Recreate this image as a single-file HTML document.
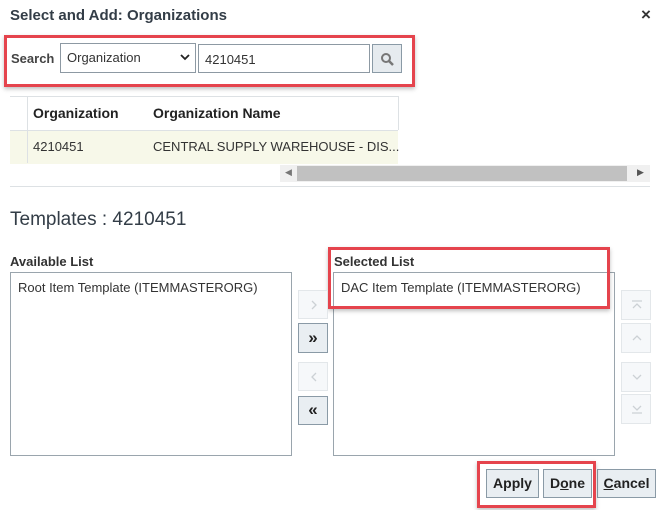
<!DOCTYPE html>
<html><head><style>
body{margin:0;width:670px;height:510px;background:#fff;font-family:"Liberation Sans",sans-serif;position:relative;overflow:hidden;color:#333}
.a{position:absolute}
.red{position:absolute;border:3px solid #e5444d;box-shadow:0 2px 4px rgba(0,0,0,.25)}
.btn{position:absolute;background:#e9eef2;border:1px solid #8a9aa6;box-sizing:border-box;text-align:center;font-size:13px;font-weight:bold;color:#222}
.dis{position:absolute;background:#f6f8fa;border:1px solid #e3e7ea;box-sizing:border-box}
.dis svg{position:absolute;left:9px;top:8px}
.box{position:absolute;border:1px solid #9aa5ad;box-sizing:border-box;background:#fff;font-size:13px;color:#333}
</style></head><body>
<div class="a" style="left:10px;top:7px;font-size:15px;font-weight:bold;color:#333d47">Select and Add: Organizations</div>
<div class="a" style="left:641px;top:5px;font-size:17px;font-weight:bold;color:#333">×</div>

<div class="a" style="left:11px;top:51px;font-size:13px;font-weight:bold;color:#444">Search</div>
<div class="box" style="left:60px;top:43px;width:136px;height:30px;border-color:#8d99a3"><span class="a" style="left:6px;top:6px;font-size:13px">Organization</span></div>
<svg class="a" style="left:180px;top:53px" width="10" height="8"><path d="M1 2 L5 6 L9 2" stroke="#222" stroke-width="1.8" fill="none"/></svg>
<div class="box" style="left:198px;top:44px;width:172px;height:29px;border-color:#8d99a3"><span class="a" style="left:6px;top:7px">4210451</span></div>
<div class="btn" style="left:372px;top:44px;width:30px;height:29px;background:#e6ebef"><svg class="a" style="left:7px;top:7px" width="15" height="15"><circle cx="6" cy="6" r="4" stroke="#777" stroke-width="2" fill="none"/><path d="M9 9 L13 13" stroke="#777" stroke-width="2.5"/></svg></div>
<div class="red" style="left:4px;top:35px;width:405px;height:46px"></div>

<div class="a" style="left:10px;top:96px;width:388px;height:1px;background:#dde1e4"></div>
<div class="a" style="left:27px;top:96px;width:1px;height:67px;background:#dde1e4"></div>
<div class="a" style="left:398px;top:96px;width:1px;height:34px;background:#dde1e4"></div>
<div class="a" style="left:33px;top:105px;font-size:14px;font-weight:bold;color:#222">Organization</div>
<div class="a" style="left:153px;top:105px;font-size:14px;font-weight:bold;color:#222">Organization Name</div>
<div class="a" style="left:10px;top:130px;width:388px;height:33px;background:#f7f8e9;border-top:1px solid #dde1e4"></div>
<div class="a" style="left:27px;top:130px;width:1px;height:33px;background:#dde1e4"></div>
<div class="a" style="left:33px;top:139px;font-size:13px">4210451</div>
<div class="a" style="left:153px;top:139px;font-size:13px">CENTRAL SUPPLY WAREHOUSE - DIS...</div>
<div class="a" style="left:280px;top:165px;width:370px;height:17px;background:#f0f0f0"></div>
<div class="a" style="left:297px;top:166px;width:330px;height:15px;background:#c1c1c1"></div>
<div class="a" style="left:285px;top:167px;font-size:9px;color:#777">◀</div>
<div class="a" style="left:637px;top:167px;font-size:9px;color:#555">▶</div>
<div class="a" style="left:10px;top:186px;width:640px;height:1px;background:#dde1e4"></div>

<div class="a" style="left:10px;top:209px;font-size:19px;color:#333d47">Templates : 4210451</div>
<div class="a" style="left:10px;top:254px;font-size:13px;font-weight:bold;color:#333">Available List</div>
<div class="box" style="left:10px;top:272px;width:282px;height:184px"><span class="a" style="left:7px;top:7px">Root Item Template (ITEMMASTERORG)</span></div>
<div class="a" style="left:334px;top:254px;font-size:13px;font-weight:bold;color:#333">Selected List</div>
<div class="box" style="left:333px;top:272px;width:282px;height:184px"><span class="a" style="left:7px;top:7px">DAC Item Template (ITEMMASTERORG)</span></div>
<div class="red" style="left:328px;top:247px;width:276px;height:56px"></div>

<div class="dis" style="left:298px;top:290px;width:30px;height:29px"><svg width="12" height="12"><path d="M4 2 L8 6 L4 10" stroke="#ccd1d5" stroke-width="1.3" fill="none"/></svg></div>
<div class="btn" style="left:298px;top:323px;width:30px;height:30px;line-height:27px;font-size:17px">»</div>
<div class="dis" style="left:298px;top:362px;width:30px;height:29px"><svg width="12" height="12"><path d="M8 2 L4 6 L8 10" stroke="#ccd1d5" stroke-width="1.3" fill="none"/></svg></div>
<div class="btn" style="left:298px;top:396px;width:30px;height:29px;line-height:26px;font-size:17px">«</div>

<div class="dis" style="left:621px;top:290px;width:30px;height:30px"><svg width="12" height="12"><path d="M1 2 H11 M2 9 L6 5 L10 9" stroke="#ccd1d5" stroke-width="1.3" fill="none"/></svg></div>
<div class="dis" style="left:621px;top:323px;width:30px;height:30px"><svg width="12" height="12"><path d="M2 8 L6 4 L10 8" stroke="#ccd1d5" stroke-width="1.3" fill="none"/></svg></div>
<div class="dis" style="left:621px;top:362px;width:30px;height:30px"><svg width="12" height="12"><path d="M2 4 L6 8 L10 4" stroke="#ccd1d5" stroke-width="1.3" fill="none"/></svg></div>
<div class="dis" style="left:621px;top:394px;width:30px;height:30px"><svg width="12" height="12"><path d="M2 3 L6 7 L10 3 M1 10 H11" stroke="#ccd1d5" stroke-width="1.3" fill="none"/></svg></div>

<div class="btn" style="left:486px;top:469px;width:53px;height:29px;line-height:27px;font-size:14px">Apply</div>
<div class="btn" style="left:543px;top:469px;width:49px;height:29px;line-height:27px;font-size:14px">D<u>o</u>ne</div>
<div class="btn" style="left:597px;top:469px;width:59px;height:29px;line-height:27px;font-size:14px"><u>C</u>ancel</div>
<div class="red" style="left:477px;top:461px;width:113px;height:41px"></div>
</body></html>
